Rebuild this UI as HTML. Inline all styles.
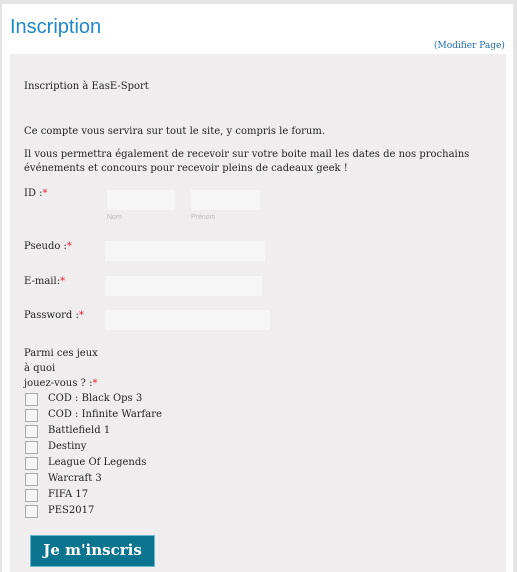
<!DOCTYPE html><html style="height:572px;overflow:hidden"><head><style>
body{margin:0;width:517px;height:572px;background:#e4e4e4;overflow:hidden;position:relative;font-family:"DejaVu Serif",serif;font-size:10px;color:#222}
.p{position:absolute;left:2px;top:4px;width:511px;height:568px;background:#fff}
.g{position:absolute;left:10px;top:54px;width:496px;height:518px;background:#efeded}
.a{position:absolute;white-space:nowrap}
.in{position:absolute;background:#f6f6f6;height:20px}
.r{color:#e8203a}
.cb{position:absolute;left:25px;width:11px;height:11px;border:1px solid #aaa;background:#f5f5f5}
.sm{position:absolute;font-family:"Liberation Sans",sans-serif;font-size:7px;color:#bbb}
</style></head><body>
<div class="p"></div>
<div class="g"></div>
<div class="a" style="left:10px;top:16px;font-family:'Liberation Sans',sans-serif;font-size:20px;color:#1e88c8">Inscription</div>
<div class="a" style="left:434px;top:41px;font-size:9px;color:#1e6aa8">(Modifier Page)</div>
<div class="a" style="left:24px;top:81px">Inscription à EasE-Sport</div>
<div class="a" style="left:24px;top:126px">Ce compte vous servira sur tout le site, y compris le forum.</div>
<div class="a" style="left:24px;top:148px;line-height:14px">Il vous permettra également de recevoir sur votre boite mail les dates de nos prochains<br>événements et concours pour recevoir pleins de cadeaux geek !</div>
<div class="a" style="left:24px;top:188px">ID :<span class="r">*</span></div>
<div class="in" style="left:107px;top:190px;width:68px"></div>
<div class="in" style="left:191px;top:190px;width:69px"></div>
<div class="sm" style="left:107px;top:214px">Nom</div>
<div class="sm" style="left:191px;top:214px">Prénom</div>
<div class="a" style="left:24px;top:241px">Pseudo :<span class="r">*</span></div>
<div class="in" style="left:105px;top:241px;width:160px"></div>
<div class="a" style="left:24px;top:276px">E-mail:<span class="r">*</span></div>
<div class="in" style="left:105px;top:276px;width:157px"></div>
<div class="a" style="left:24px;top:310px">Password :<span class="r">*</span></div>
<div class="in" style="left:105px;top:310px;width:165px"></div>
<div class="a" style="left:24px;top:346px;line-height:15px">Parmi ces jeux<br>à quoi<br>jouez-vous ? :<span class="r">*</span></div>
<div class="cb" style="top:393px"></div><div class="a" style="left:48px;top:393px">COD : Black Ops 3</div>
<div class="cb" style="top:409px"></div><div class="a" style="left:48px;top:409px">COD : Infinite Warfare</div>
<div class="cb" style="top:425px"></div><div class="a" style="left:48px;top:425px">Battlefield 1</div>
<div class="cb" style="top:441px"></div><div class="a" style="left:48px;top:441px">Destiny</div>
<div class="cb" style="top:457px"></div><div class="a" style="left:48px;top:457px">League Of Legends</div>
<div class="cb" style="top:473px"></div><div class="a" style="left:48px;top:473px">Warcraft 3</div>
<div class="cb" style="top:489px"></div><div class="a" style="left:48px;top:489px">FIFA 17</div>
<div class="cb" style="top:505px"></div><div class="a" style="left:48px;top:505px">PES2017</div>
<div style="position:absolute;left:30px;top:535px;width:125px;height:32px;background:#0b7590;border:1px solid #6ab8cc;box-sizing:border-box;color:#fff;font-weight:bold;font-size:15px;text-align:center;line-height:29px">Je m'inscris</div>
</body></html>
